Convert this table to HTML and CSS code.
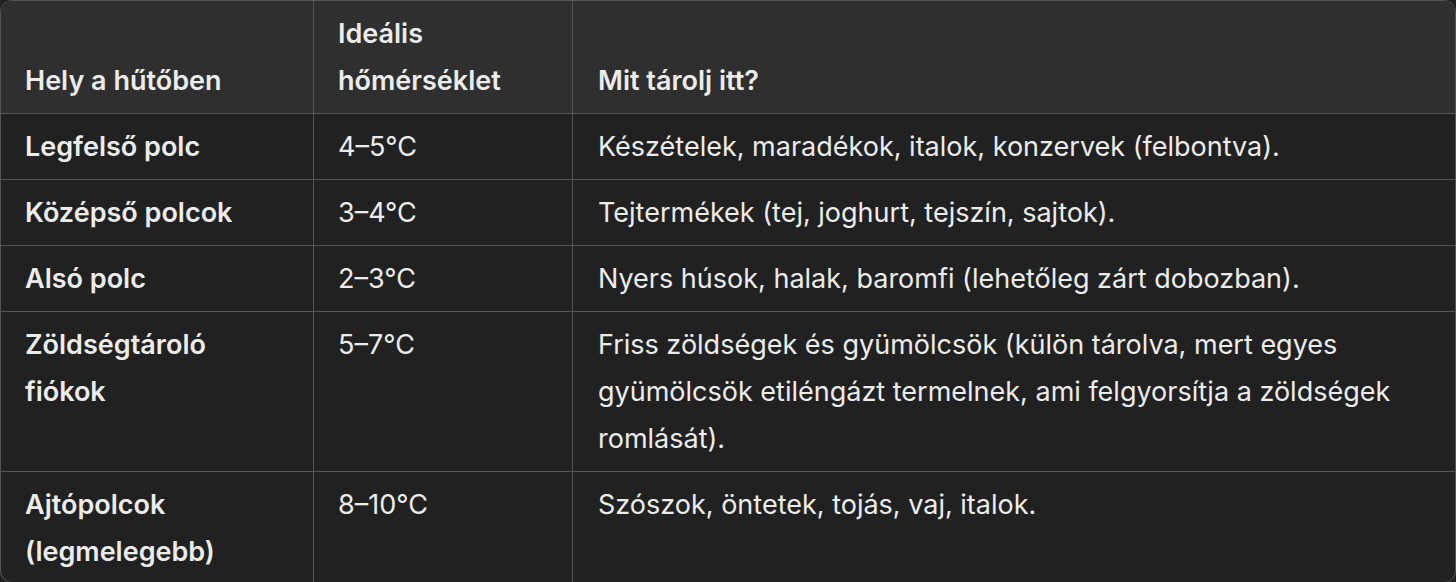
FILE: index.html
```html
<!DOCTYPE html>
<html lang="hu">
<head>
<meta charset="utf-8">
<title>Hűtő</title>
<link rel="stylesheet" href="styles.css">
</head>
<body>
<div class="wrap">
<table class="fridge">
  <thead>
    <tr>
      <th class="c1">Hely a hűtőben</th>
      <th class="c2">Ideális hőmérséklet</th>
      <th class="c3">Mit tárolj itt?</th>
    </tr>
  </thead>
  <tbody>
    <tr>
      <td class="name">Legfelső polc</td>
      <td>4–5°C</td>
      <td>Készételek, maradékok, italok, konzervek (felbontva).</td>
    </tr>
    <tr>
      <td class="name">Középső polcok</td>
      <td>3–4°C</td>
      <td>Tejtermékek (tej, joghurt, tejszín, sajtok).</td>
    </tr>
    <tr>
      <td class="name">Alsó polc</td>
      <td>2–3°C</td>
      <td>Nyers húsok, halak, baromfi (lehetőleg zárt dobozban).</td>
    </tr>
    <tr>
      <td class="name">Zöldségtároló fiókok</td>
      <td>5–7°C</td>
      <td>Friss zöldségek és gyümölcsök (külön tárolva, mert egyes gyümölcsök etiléngázt termelnek, ami felgyorsítja a zöldségek romlását).</td>
    </tr>
    <tr>
      <td class="name">Ajtópolcok (legmelegebb)</td>
      <td>8–10°C</td>
      <td>Szószok, öntetek, tojás, vaj, italok.</td>
    </tr>
  </tbody>
</table>
</div>
</body>
</html>
```
FILE: styles.css
```css
html, body {
  margin: 0;
  padding: 0;
  background: #212121;
}
.wrap {
  width: 1456px;
  height: 582px;
  overflow: hidden;
}
.fridge {
  width: 1456px;
  border-collapse: separate;
  border-spacing: 0;
  border: 1px solid #555555;
  border-radius: 12px;
  overflow: hidden;
  font-family: Inter, "Noto Sans", sans-serif;
  font-size: 27px;
  line-height: 47px;
  color: #ececec;
  background: #212121;
  table-layout: fixed;
}
.fridge th, .fridge td {
  padding: 9px 24px 9px 24px;
  text-align: left;
  border-right: 1px solid #555555;
  border-bottom: 1px solid #555555;
  vertical-align: top;
}
.fridge th:last-child, .fridge td:last-child {
  border-right: none;
  padding-left: 25px;
}
.fridge tbody tr:last-child td {
  border-bottom: none;
  padding-bottom: 7px;
}
.fridge thead th {
  background: #2f2f2f;
  font-weight: 600;
  vertical-align: bottom;
}
.fridge .c1 { width: 264px; }
.fridge .c2 { width: 210px; }
.fridge td.name {
  font-weight: 600;
}
```
